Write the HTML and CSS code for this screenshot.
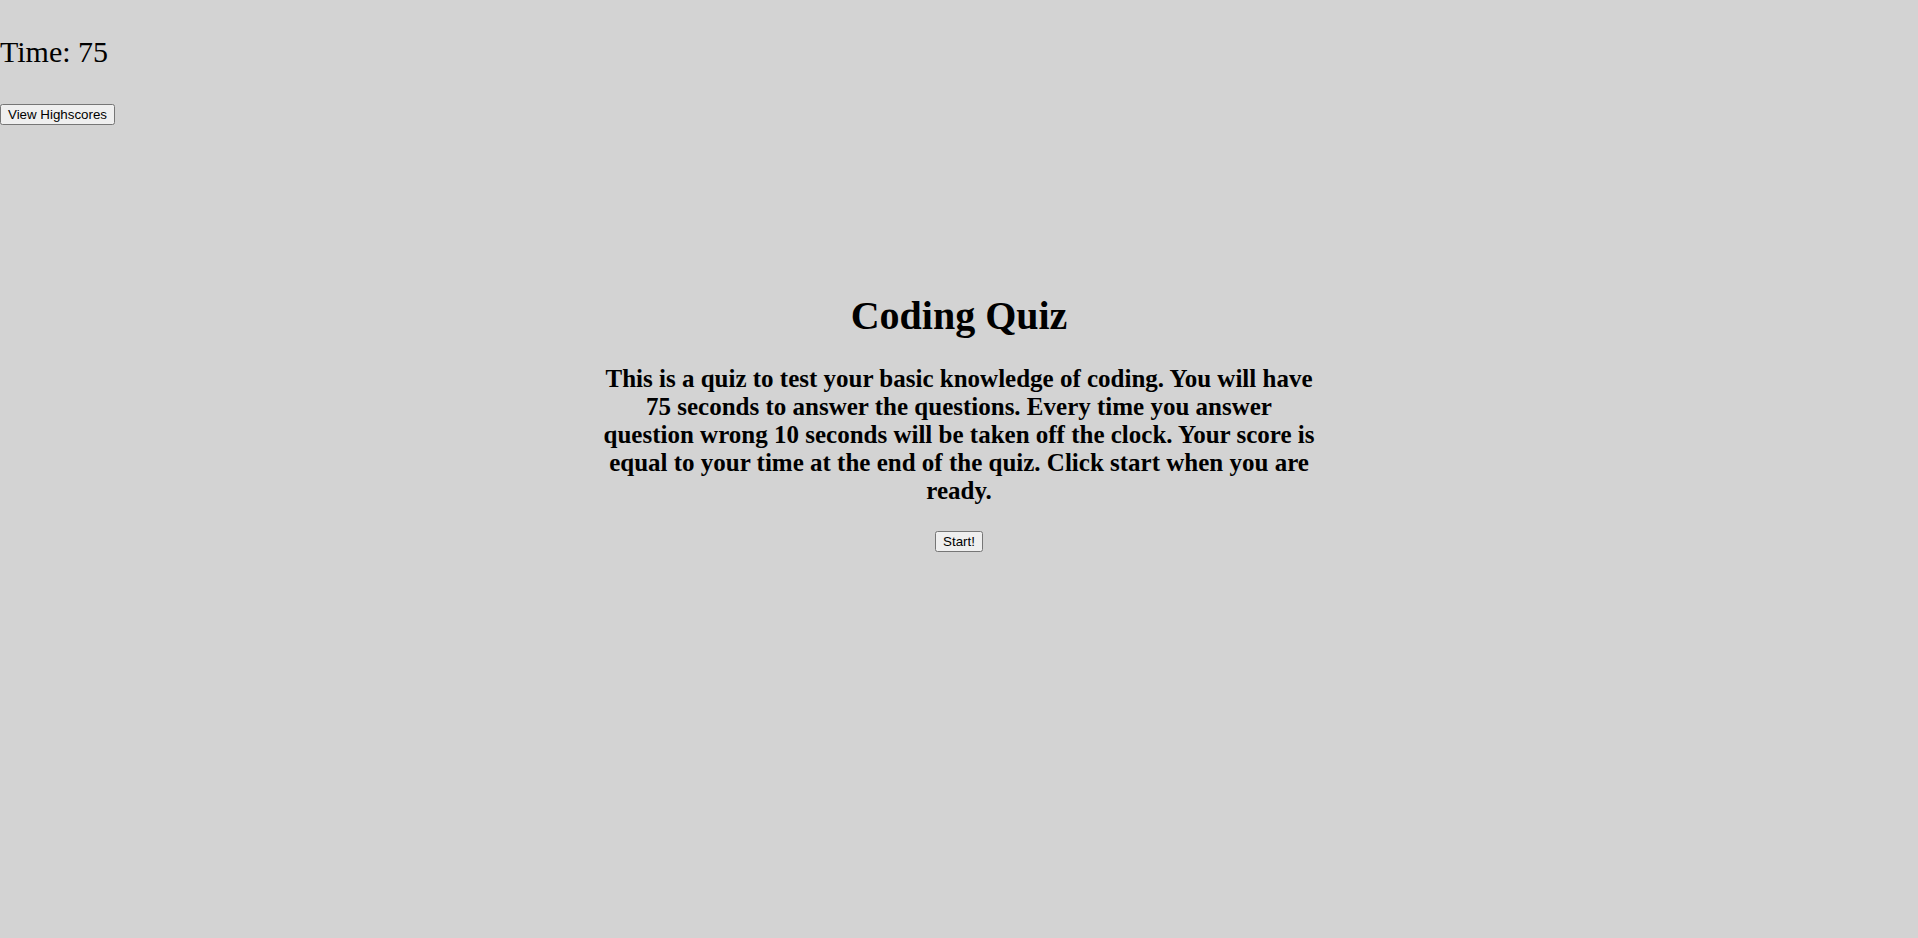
FILE: index.html
```html
<!DOCTYPE html>
<html lang="en">
<head>
<meta charset="utf-8">
<title>Coding Quiz</title>
<link rel="stylesheet" href="styles.css">
</head>
<body>
  <header class="top-bar">
    <p class="timer">Time: 75</p>
    <button class="btn">View Highscores</button>
  </header>
  <main class="intro">
    <h1 class="intro-title">Coding Quiz</h1>
    <h2 class="intro-text">This is a quiz to test your basic knowledge of coding. You will have 75 seconds to answer the questions. Every time you answer question wrong 10 seconds will be taken off the clock. Your score is equal to your time at the end of the quiz. Click start when you are ready.</h2>
    <button class="btn">Start!</button>
  </main>
</body>
</html>
```
FILE: styles.css
```css
html, body {
  margin: 0;
  padding: 0;
  background: #d3d3d3;
  color: #000;
  font-family: "Liberation Serif", "Times New Roman", serif;
}

.top-bar {
  display: flex;
  flex-direction: column;
  align-items: flex-start;
  padding-top: 35px;
}

.timer {
  margin: 0 0 35px;
  font-size: 30px;
  line-height: normal;
}

.btn {
  font-family: "Liberation Sans", Arial, sans-serif;
  font-size: 13.333px;
  color: #000;
}

.intro {
  width: 720px;
  margin: 167px auto 0;
  display: flex;
  flex-direction: column;
  align-items: center;
  text-align: center;
}

.intro-title {
  margin: 0 0 26px;
  font-size: 40px;
  font-weight: bold;
  line-height: normal;
}

.intro-text {
  margin: 0 0 26px;
  font-size: 25px;
  font-weight: bold;
  line-height: 27.9px;
}
```
